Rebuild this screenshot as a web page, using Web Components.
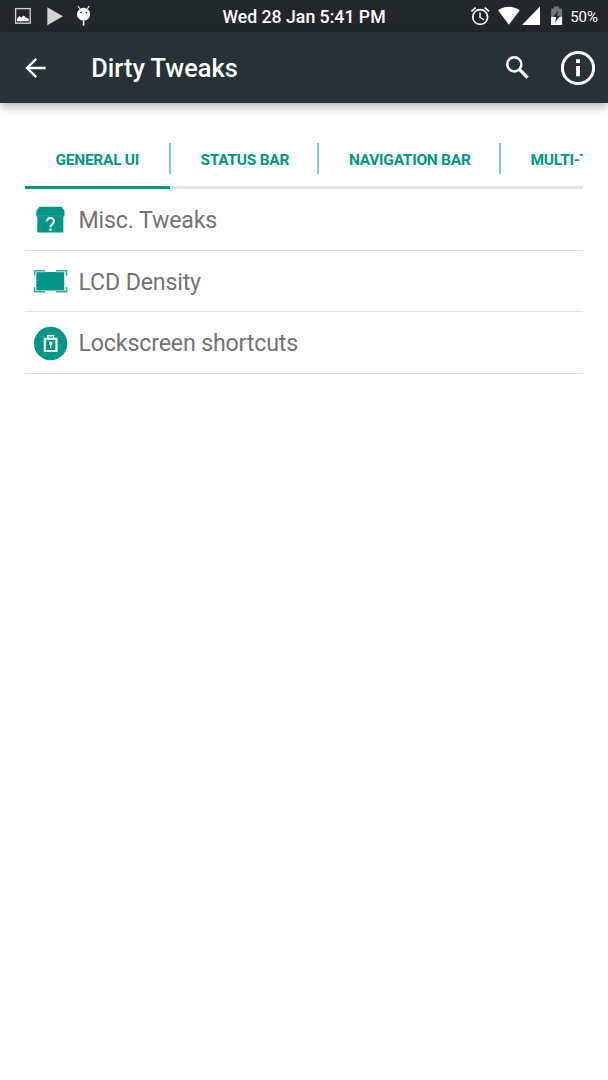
<!DOCTYPE html>
<html lang="en">
<head>
<meta charset="utf-8">
<title>Dirty Tweaks</title>
<style>
  body {
    margin: 0;
    background: #fff;
    font-family: Roboto, "Liberation Sans", sans-serif;
  }
</style>
</head>
<body>
<settings-screen></settings-screen>

<script>
class StatusBar extends HTMLElement {
  constructor() {
    super();
    this.attachShadow({ mode: 'open' });
  }

  connectedCallback() {
    this.shadowRoot.innerHTML = `
      <style>
        :host {
          display: grid;
          grid-template-columns: 1fr auto 1fr;
          align-items: center;
          height: 32px;
          background: #22272a;
          color: #fff;
        }

        svg {
          display: block;
        }

        .notifications {
          display: flex;
          align-items: center;
          padding-left: 14px;
        }

        .clock {
          padding-top: 2px;
          font-size: 17.7px;
          line-height: 30px;
          font-weight: 500;
        }

        .system {
          display: flex;
          align-items: center;
          justify-content: flex-end;
          padding-right: 10px;
        }

        .battery {
          margin-left: 6px;
          padding-top: 2px;
          font-size: 15px;
          line-height: 30px;
        }
      </style>
      <div class="notifications">
        <svg width="76" height="32" viewBox="14 0 76 32">
          <rect x="15.6" y="8.6" width="14.6" height="14.6" fill="none" stroke="#d0d2d2" stroke-width="1.3"/>
          <path d="M17 21.3v-2.6l2.4-2.6 2 1.3 2.3-1.8 2.3 2.1 2.6.9v2.7z" fill="#fff"/>
          <path d="M47.3 7.2v18L63 16.2z" fill="#d3d4d4"/>
          <path d="M78 6l1.8 2.8M89.2 6l-1.8 2.8" stroke="#fff" stroke-width="1.1"/>
          <ellipse cx="83.6" cy="14.2" rx="6.6" ry="6.4" fill="#fff"/>
          <path d="M83.6 20.5v5.2" stroke="#fff" stroke-width="1.7"/>
          <circle cx="81" cy="12.6" r=".8" fill="#22272a"/>
          <circle cx="86.3" cy="12.6" r=".8" fill="#22272a"/>
        </svg>
      </div>
      <div class="clock"><slot name="clock"></slot></div>
      <div class="system">
        <svg width="94" height="32" viewBox="470 0 94 32">
          <g fill="none" stroke="#fff" stroke-width="1.7">
            <circle cx="480.2" cy="17" r="7.4"/>
            <path d="M471.4 11.4l4.3-3.7M489 11.4l-4.3-3.7"/>
            <path d="M480 12.4v5l3.7 2.3" stroke-width="1.5"/>
          </g>
          <path d="M498 10.3c6-4.7 15.6-4.7 21.8 0l-10.9 14.5z" fill="#fff"/>
          <path d="M540 6.6v18.3h-18z" fill="#fff"/>
          <path d="M551.1 8.4h2.9V6.6h4.8v1.8h3.3V18h-11z" fill="#73777a"/>
          <path d="M551.1 16.8h11V25h-11z" fill="#fff"/>
          <path d="M558.3 10.5L553 17h3.3l-1.4 5.6 5.3-6.8h-3.3z" fill="#22272a"/>
        </svg>
        <span class="battery"><slot name="battery"></slot></span>
      </div>
    `;
  }
}

class AppToolbar extends HTMLElement {
  constructor() {
    super();
    this.attachShadow({ mode: 'open' });
  }

  connectedCallback() {
    this.shadowRoot.innerHTML = `
      <style>
        :host {
          display: flex;
          align-items: center;
          box-sizing: border-box;
          height: 71px;
          padding: 0 12.5px 0 24px;
          background: #273237;
          color: #fff;
          box-shadow: 0 4px 9px rgba(0, 0, 0, 0.28);
        }

        h1 {
          flex: 1;
          margin: 0 0 0 43.3px;
          padding-top: 2px;
          font-size: 25.4px;
          line-height: 69px;
          font-weight: 500;
        }

        button {
          display: block;
          padding: 0;
          border: none;
          background: transparent;
          color: inherit;
        }

        svg {
          display: block;
        }

        .search {
          padding-bottom: 1px;
        }

        .info {
          margin-left: 30px;
        }
      </style>
      <button aria-label="Back">
        <svg width="24" height="24" viewBox="0 0 24 24" fill="none" stroke="currentColor" stroke-width="2.4">
          <path d="M21.7 12H3.5M12.3 2.8L3 12l9.3 9.2"/>
        </svg>
      </button>
      <h1><slot></slot></h1>
      <button class="search" aria-label="Search">
        <svg width="26" height="26" viewBox="0 0 26 26" fill="none" stroke="currentColor">
          <circle cx="10.3" cy="10.3" r="7.1" stroke-width="2.5"/>
          <path d="M15.4 15.4l8.2 8.2" stroke-width="3.2"/>
        </svg>
      </button>
      <button class="info" aria-label="Info">
        <svg width="36" height="36" viewBox="0 0 36 36">
          <circle cx="18" cy="18" r="15.6" fill="none" stroke="currentColor" stroke-width="3"/>
          <path d="M16.1 9.3h3.8v3.6h-3.8zM16.1 15.9h3.8v10.3h-3.8z" fill="currentColor"/>
        </svg>
      </button>
    `;
  }
}

class TabStrip extends HTMLElement {
  constructor() {
    super();
    this.attachShadow({ mode: 'open' });
  }

  connectedCallback() {
    this.shadowRoot.innerHTML = `
      <style>
        :host {
          display: flex;
          height: 59px;
          overflow: hidden;
          background: linear-gradient(#e3e3e3, #e3e3e3) bottom / 100% 3px no-repeat;
        }
      </style>
      <slot></slot>
    `;
  }
}

class TabItem extends HTMLElement {
  constructor() {
    super();
    this.attachShadow({ mode: 'open' });
  }

  connectedCallback() {
    this.shadowRoot.innerHTML = `
      <style>
        :host {
          display: flex;
          flex: none;
          box-sizing: border-box;
          height: 59px;
          border-bottom: 3px solid transparent;
          color: #009688;
          font-size: 15.5px;
          line-height: 61px;
          letter-spacing: -0.27px;
          font-weight: 700;
          white-space: nowrap;
        }

        :host([selected]) {
          border-bottom-color: #009688;
        }

        .label {
          box-sizing: border-box;
          width: var(--tab-width, auto);
          padding-left: 30.5px;
        }

        .divider {
          width: 2px;
          height: 31px;
          margin: 13px -1px 0 -1px;
          background: #80cbc4;
        }
      </style>
      <span class="label"><slot></slot></span>
      <span class="divider"></span>
    `;
  }
}

class SettingRow extends HTMLElement {
  constructor() {
    super();
    this.attachShadow({ mode: 'open' });
  }

  connectedCallback() {
    this.shadowRoot.innerHTML = `
      <style>
        :host {
          display: flex;
          align-items: center;
          box-sizing: border-box;
          height: 61.6px;
          padding: 2px 0 0 8px;
          border-bottom: 1px solid #dedede;
          color: #737373;
          font-size: 23.2px;
          letter-spacing: -0.17px;
        }

        ::slotted(svg) {
          display: block;
          flex: none;
          margin-right: 10.5px;
        }
      </style>
      <slot name="icon"></slot>
      <span><slot></slot></span>
    `;
  }
}

class SettingsScreen extends HTMLElement {
  constructor() {
    super();
    this.attachShadow({ mode: 'open' });
  }

  connectedCallback() {
    this.shadowRoot.innerHTML = `
      <style>
        :host {
          display: block;
          height: 1080px;
          overflow: hidden;
        }

        main {
          padding: 27px 25px 0;
        }
      </style>
      <status-bar>
        <span slot="clock">Wed 28 Jan 5:41 PM</span>
        <span slot="battery">50%</span>
      </status-bar>
      <app-toolbar>Dirty Tweaks</app-toolbar>
      <main>
        <tab-strip>
          <tab-item selected style="--tab-width: 145px">GENERAL UI</tab-item>
          <tab-item style="--tab-width: 148.4px">STATUS BAR</tab-item>
          <tab-item style="--tab-width: 181.6px">NAVIGATION BAR</tab-item>
          <tab-item>MULTI-TASKING</tab-item>
        </tab-strip>
        <setting-row>
          <svg slot="icon" width="35" height="35" viewBox="0 0 35 35">
            <path d="M6.5 3.8h22L31.5 8v5.5H3.3V8z" fill="#009688"/>
            <path d="M4.3 13h26v16.5h-26z" fill="#009688"/>
            <path d="M4.8 12.8h25" stroke="#4db6ac" stroke-width=".8" stroke-dasharray="1 .6"/>
            <path d="M13.9 18.5c0-4.6 7-4.5 7-.3 0 2.9-3.4 3-3.4 5.8" fill="none" stroke="#fff" stroke-width="2"/>
            <circle cx="17.5" cy="26.7" r="1.4" fill="#fff"/>
          </svg>
          Misc. Tweaks
        </setting-row>
        <setting-row>
          <svg slot="icon" width="35" height="35" viewBox="0 0 35 35">
            <path d="M3.4 8h27.8v18.5H3.4z" fill="#009688"/>
            <path d="M1.6 11.5V6.7h10.6M23 6.7h10.6v4.8M33.6 23v4.8H23M12.2 27.8H1.6V23" fill="none" stroke="#33aba0" stroke-width="1.5"/>
            <path d="M2.9 11.5V8h9.3M23 8h9.3v3.5M32.3 23v3.5H23M12.2 26.5H2.9V23" fill="none" stroke="#8fd0ca" stroke-width=".6"/>
          </svg>
          LCD Density
        </setting-row>
        <setting-row>
          <svg slot="icon" width="35" height="35" viewBox="0 0 35 35">
            <circle cx="17.6" cy="17.5" r="16.7" fill="#009688"/>
            <g fill="none" stroke="#fff">
              <path d="M11.8 12.9h11.7V25H11.8z" stroke-width="2.2" stroke-linejoin="round"/>
              <path d="M14.8 12.5V9.8h5.7v2.7" stroke-width="1.5"/>
            </g>
            <circle cx="17.7" cy="17.5" r="1.7" fill="#fff"/>
            <path d="M17 17.5h1.4V22H17z" fill="#fff"/>
          </svg>
          Lockscreen shortcuts
        </setting-row>
      </main>
    `;
  }
}

customElements.define('status-bar', StatusBar);
customElements.define('app-toolbar', AppToolbar);
customElements.define('tab-strip', TabStrip);
customElements.define('tab-item', TabItem);
customElements.define('setting-row', SettingRow);
customElements.define('settings-screen', SettingsScreen);
</script>
</body>
</html>
